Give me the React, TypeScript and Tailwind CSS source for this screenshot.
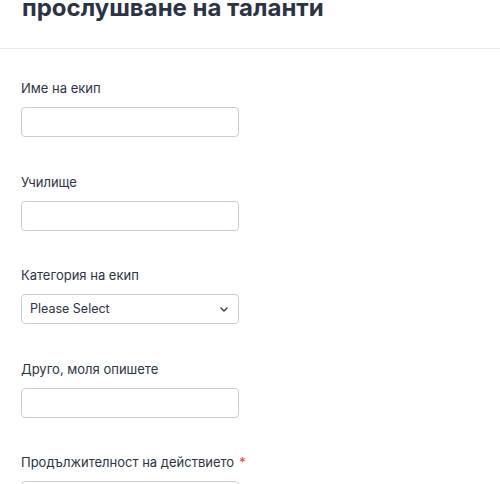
import React from "react";

// ─── Form field pieces ─────────────────────────────────────────────────────────

function Label({ text, required }: { text: string; required?: boolean }) {
  return (
    <label className="block text-[13px] leading-[20px] text-[#2c3345] mb-[9px]">
      {text}
      {required && <span className="ml-[5px] text-[#f23a3c]">*</span>}
    </label>
  );
}

function TextField({ label, required }: { label: string; required?: boolean }) {
  return (
    <div className="mb-[34.5px]">
      <Label text={label} required={required} />
      <input
        type="text"
        className="block w-[218px] h-[30px] rounded-[4px] border border-[#c9ccd8] bg-white px-2 text-[13px] text-[#2c3345] outline-none"
      />
    </div>
  );
}

function SelectField({ label }: { label: string }) {
  return (
    <div className="mb-[34.5px]">
      <Label text={label} />
      <div className="relative w-[218px] h-[30px] rounded-[4px] border border-[#c9ccd8] bg-white flex items-center px-[8px]">
        <span className="text-[12.5px] text-[#2c3345]">Please Select</span>
        <svg className="absolute right-[10px] top-[12px] h-[5px] w-[8px]" viewBox="0 0 8 5" fill="none">
          <path d="M1 1l3 3 3-3" stroke="#2c3345" strokeWidth={1.3} strokeLinecap="round" strokeLinejoin="round" />
        </svg>
      </div>
    </div>
  );
}

// ─── Page ──────────────────────────────────────────────────────────────────────

export default function App() {
  return (
    <div
      className="min-h-[484px] w-[500px] bg-white overflow-hidden"
      style={{ fontFamily: "Inter, 'Noto Sans', sans-serif" }}
    >
      {/* Header (scrolled so only the last title line shows) */}
      <div className="border-b border-[#eaebf1] px-[22px] pb-[24px]">
        <h1 className="-mt-[8px] text-[24px] leading-[32px] font-bold text-[#2c3345]">
          прослушване на таланти
        </h1>
      </div>

      {/* Fields */}
      <div className="px-[21px] pt-[29px]">
        <TextField label="Име на екип" />
        <TextField label="Училище" />
        <SelectField label="Категория на екип" />
        <TextField label="Друго, моля опишете" />
        <TextField label="Продължителност на действието" required />
      </div>
    </div>
  );
}
